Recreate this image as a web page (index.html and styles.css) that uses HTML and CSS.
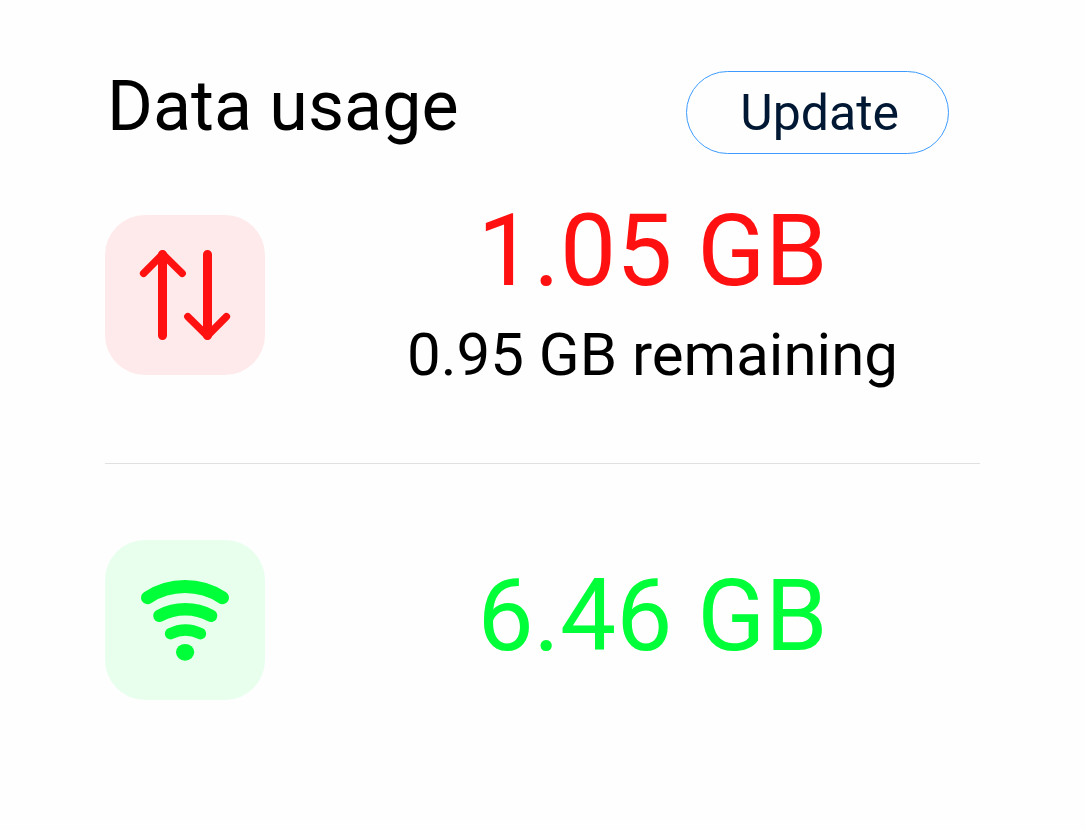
FILE: index.html
```html
<!DOCTYPE html>
<html lang="en">
<head>
<meta charset="utf-8">
<meta name="viewport" content="width=device-width, initial-scale=1">
<title>Data usage</title>
<link rel="stylesheet" href="styles.css">
</head>
<body>
<main class="usage">
  <header class="usage-header">
    <h1 class="usage-title">Data usage</h1>
    <button class="update-button" type="button">Update</button>
  </header>
  <section class="usage-row usage-row-mobile" aria-label="Mobile data">
    <svg class="tile tile-mobile" viewBox="0 0 160 160" fill="none" stroke="#ff1111" stroke-linecap="round" stroke-linejoin="round" aria-hidden="true">
      <path stroke-width="9" d="M57.5 39.5V120.5M102.5 39.5V120.5"/>
      <path stroke-width="7.4" d="M38.6 58.4L57.7 39.2L77.2 58.4M82.8 101.6L102.3 120.8L121.4 101.6"/>
    </svg>
    <div class="figures">
      <p class="amount amount-mobile">1.05 GB</p>
      <p class="remaining">0.95 GB remaining</p>
    </div>
  </section>
  <section class="usage-row usage-row-wifi" aria-label="Wi-Fi data">
    <svg class="tile tile-wifi" viewBox="0 0 160 160" fill="none" stroke="#00ff38" stroke-linecap="round" aria-hidden="true">
      <path stroke-width="13" d="M42.5 57.7A69 69 0 0 1 117.5 57.7"/>
      <path stroke-width="12.6" d="M54.5 75.7A55 55 0 0 1 106 75.7"/>
      <path stroke-width="11.4" d="M65.5 93.7A33.5 33.5 0 0 1 95.5 93.7"/>
      <ellipse cx="80.1" cy="112.3" rx="9.1" ry="8.4" fill="#00ff38" stroke="none"/>
    </svg>
    <div class="figures figures-wifi">
      <p class="amount amount-wifi">6.46 GB</p>
    </div>
  </section>
</main>
</body>
</html>
```
FILE: styles.css
```css
* {
  box-sizing: border-box;
}

body {
  margin: 0;
  background: #fefefe;
  color: #000;
  font-family: Roboto, "Liberation Sans", sans-serif;
}

h1,
p {
  margin: 0;
  font-weight: 400;
}

.usage {
  padding: 71px 105px;
}

.usage-header {
  display: flex;
  align-items: flex-start;
  justify-content: space-between;
  padding: 0 31px 0 2px;
  margin-bottom: 47px;
}

.usage-title {
  font-size: 70px;
  line-height: 70px;
}

.update-button {
  padding: 1px 49px 0 53px;
  border: 1px solid #3d9bff;
  border-radius: 42px;
  background: transparent;
  color: #001833;
  font-family: inherit;
  font-size: 50px;
  line-height: 80px;
}

.usage-row {
  display: flex;
  align-items: center;
  gap: 60px;
}

.usage-row-mobile {
  padding-bottom: 74px;
  border-bottom: 1px solid #e0e0e0;
}

.usage-row-wifi {
  padding-top: 76px;
}

.tile {
  flex: none;
  width: 160px;
  height: 160px;
  border-radius: 40px;
}

.tile-mobile {
  background: #ffeaeb;
}

.tile-wifi {
  background: #e8ffee;
}

.figures {
  flex: 1;
  display: flex;
  flex-direction: column;
  gap: 20px;
  text-align: center;
}

.figures-wifi {
  padding-bottom: 8px;
}

.amount {
  font-size: 100px;
  line-height: 100px;
}

.amount-mobile {
  color: #ff1111;
}

.amount-wifi {
  color: #00ff38;
}

.remaining {
  font-size: 60px;
  line-height: 68px;
}
```
